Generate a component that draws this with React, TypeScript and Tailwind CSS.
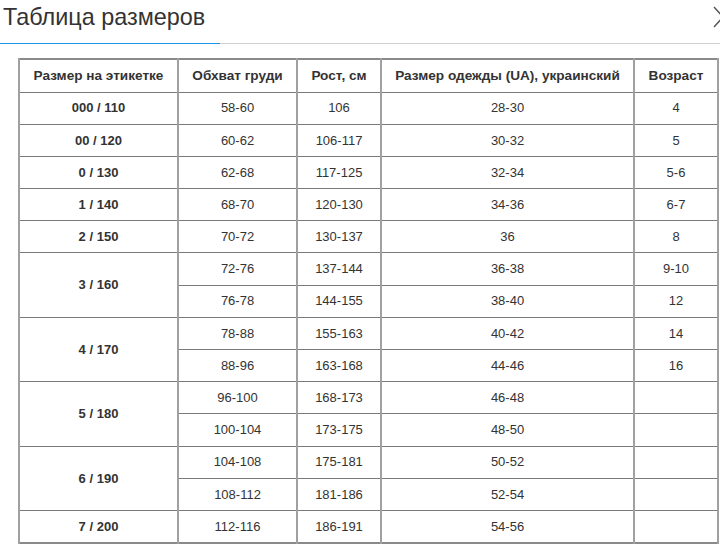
type Row = { chest: string; height: string; ua: string; age: string };
type Group = { label: string; rows: Row[] };

const groups: Group[] = [
  { label: '000 / 110', rows: [{ chest: '58-60', height: '106', ua: '28-30', age: '4' }] },
  { label: '00 / 120', rows: [{ chest: '60-62', height: '106-117', ua: '30-32', age: '5' }] },
  { label: '0 / 130', rows: [{ chest: '62-68', height: '117-125', ua: '32-34', age: '5-6' }] },
  { label: '1 / 140', rows: [{ chest: '68-70', height: '120-130', ua: '34-36', age: '6-7' }] },
  { label: '2 / 150', rows: [{ chest: '70-72', height: '130-137', ua: '36', age: '8' }] },
  {
    label: '3 / 160',
    rows: [
      { chest: '72-76', height: '137-144', ua: '36-38', age: '9-10' },
      { chest: '76-78', height: '144-155', ua: '38-40', age: '12' },
    ],
  },
  {
    label: '4 / 170',
    rows: [
      { chest: '78-88', height: '155-163', ua: '40-42', age: '14' },
      { chest: '88-96', height: '163-168', ua: '44-46', age: '16' },
    ],
  },
  {
    label: '5 / 180',
    rows: [
      { chest: '96-100', height: '168-173', ua: '46-48', age: '' },
      { chest: '100-104', height: '173-175', ua: '48-50', age: '' },
    ],
  },
  {
    label: '6 / 190',
    rows: [
      { chest: '104-108', height: '175-181', ua: '50-52', age: '' },
      { chest: '108-112', height: '181-186', ua: '52-54', age: '' },
    ],
  },
  { label: '7 / 200', rows: [{ chest: '112-116', height: '186-191', ua: '54-56', age: '' }] },
];

const cell = 'border-y border-x-2 border-y-[#7a7a7a] border-x-[#a0a0a0] text-center align-middle h-[32.2px] p-0';

export default function App() {
  return (
    <div className="w-[720px] h-[548px] overflow-hidden bg-white text-[#333] font-['Liberation_Sans',Arial,sans-serif]">
      <div className="relative h-[44px]">
        <h2 className="pl-[3px] pt-[3px] text-[23.4px] leading-[28px] font-normal text-[#333]">Таблица размеров</h2>
        <svg className="absolute right-[-6px] top-[6px]" width="14" height="22" viewBox="0 0 14 22">
          <path d="M2 1 L11 11 L2 21" fill="none" stroke="#555" strokeWidth="1.4" />
        </svg>
        <div className="absolute left-0 right-0 bottom-0 flex h-px">
          <div className="w-[220px] h-px bg-[#1e96e6]" />
          <div className="flex-1 h-px bg-[#d0d0d0]" />
        </div>
      </div>
      <div className="pl-[18px] pt-[14px]">
        <table className="table-fixed border-collapse w-[699px] text-[13px] border-2 border-[#8a8a8a]">
          <colgroup>
            <col className="w-[159px]" />
            <col className="w-[119px]" />
            <col className="w-[84px]" />
            <col className="w-[253px]" />
            <col className="w-[84px]" />
          </colgroup>
          <thead>
            <tr>
              {['Размер на этикетке', 'Обхват груди', 'Рост, см', 'Размер одежды (UA), украинский', 'Возраст'].map((h) => (
                <th key={h} className={`${cell} h-[33px] text-[13.6px] font-bold`}>
                  {h}
                </th>
              ))}
            </tr>
          </thead>
          <tbody>
            {groups.map((g) =>
              g.rows.map((r, i) => (
                <tr key={g.label + i}>
                  {i === 0 && (
                    <td rowSpan={g.rows.length} className={`${cell} font-bold`}>
                      {g.label}
                    </td>
                  )}
                  <td className={cell}>{r.chest}</td>
                  <td className={cell}>{r.height}</td>
                  <td className={cell}>{r.ua}</td>
                  <td className={cell}>{r.age}</td>
                </tr>
              )),
            )}
          </tbody>
        </table>
      </div>
    </div>
  );
}
